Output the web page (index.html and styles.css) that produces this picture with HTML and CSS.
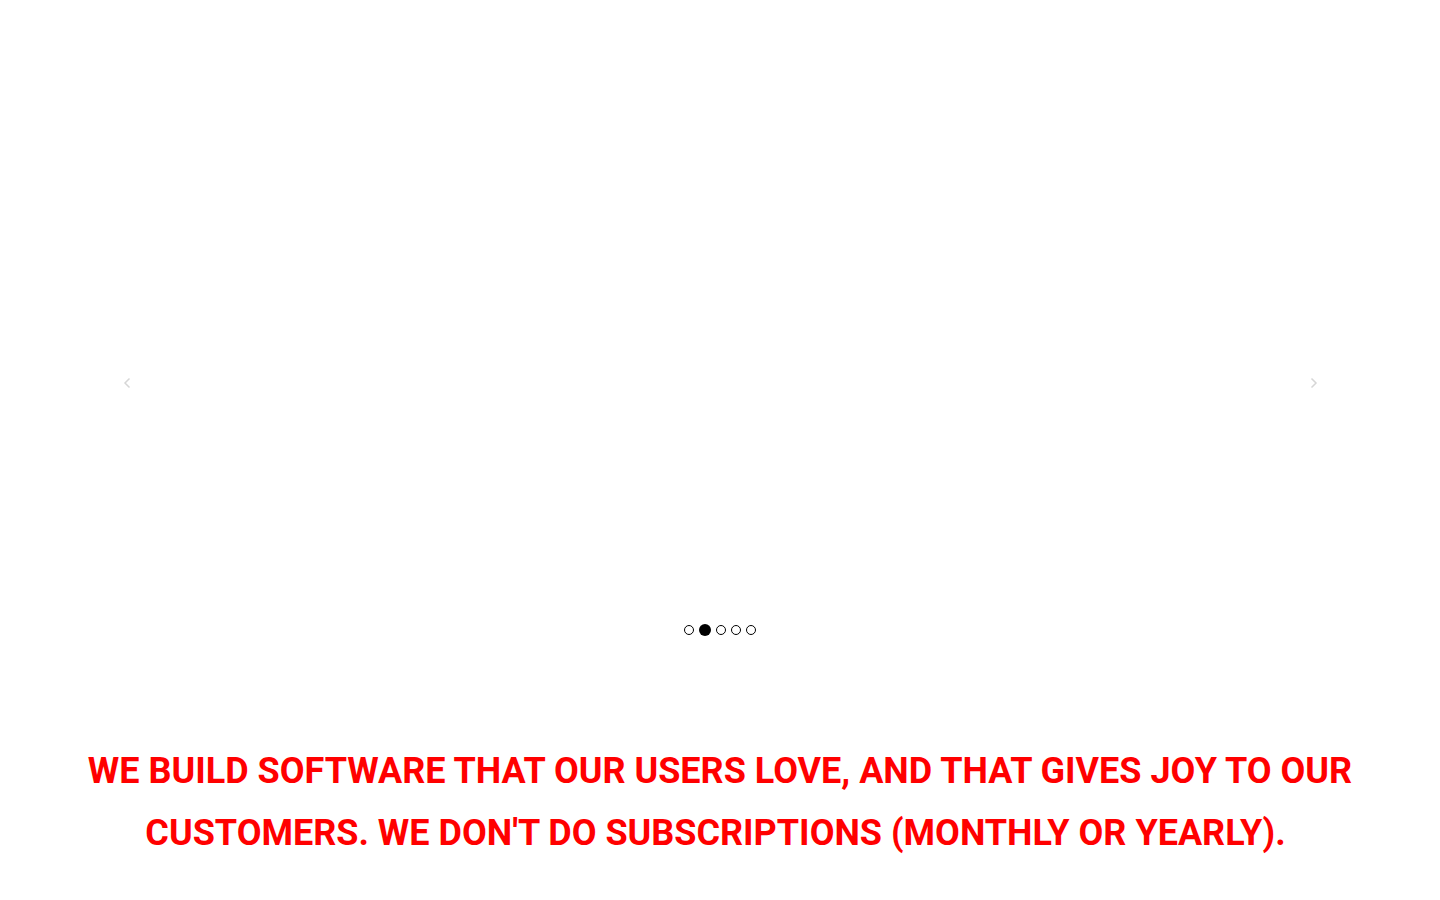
FILE: index.html
```html
<!DOCTYPE html>
<html lang="en">
<head>
<meta charset="utf-8">
<title>Software</title>
<link rel="stylesheet" href="styles.css">
</head>
<body>
<section class="carousel">
  <div class="slides">
    <button class="arrow arrow-prev" aria-label="Previous">
      <svg width="10" height="14" viewBox="0 0 10 14"><path d="M7.5 2.5 L3 7 L7.5 11.5" fill="none" stroke="#d6d6d6" stroke-width="1.5"/></svg>
    </button>
    <div class="slide"></div>
    <button class="arrow arrow-next" aria-label="Next">
      <svg width="10" height="14" viewBox="0 0 10 14"><path d="M2.5 2.5 L7 7 L2.5 11.5" fill="none" stroke="#d6d6d6" stroke-width="1.5"/></svg>
    </button>
  </div>
  <div class="dots">
    <span class="dot"></span>
    <span class="dot active"></span>
    <span class="dot"></span>
    <span class="dot"></span>
    <span class="dot"></span>
  </div>
</section>
<section class="mission">
  <h2 class="mission-text">WE BUILD SOFTWARE THAT OUR USERS LOVE, AND THAT GIVES JOY TO OUR CUSTOMERS. WE DON'T DO SUBSCRIPTIONS (MONTHLY OR YEARLY).&nbsp;</h2>
</section>
</body>
</html>
```
FILE: styles.css
```css
html, body {
  margin: 0;
  padding: 0;
  background: #fff;
}
body {
  font-family: Roboto, "Liberation Sans", sans-serif;
}
.carousel {
  height: 660px;
  display: flex;
  flex-direction: column;
}
.slides {
  height: 620px;
  display: flex;
  align-items: center;
  padding: 0 119px 0 120px;
  box-sizing: border-box;
}
.slide {
  flex: 1;
}
.arrow {
  background: none;
  border: 0;
  padding: 0;
  width: 14px;
  height: 14px;
  display: flex;
  align-items: center;
  justify-content: center;
  margin-top: 146px;
}
.dots {
  display: flex;
  justify-content: center;
  align-items: center;
  gap: 5px;
  height: 20px;
}
.dot {
  width: 8px;
  height: 8px;
  border: 1px solid #000;
  border-radius: 50%;
  box-sizing: content-box;
}
.dot.active {
  width: 12px;
  height: 12px;
  border: 0;
  background: #000;
}
.mission {
  padding: 80px 40px 0;
}
.mission-text {
  margin: 0;
  color: #ff0000;
  font-weight: 700;
  font-size: 36px;
  line-height: 62px;
  text-align: center;
}
```
